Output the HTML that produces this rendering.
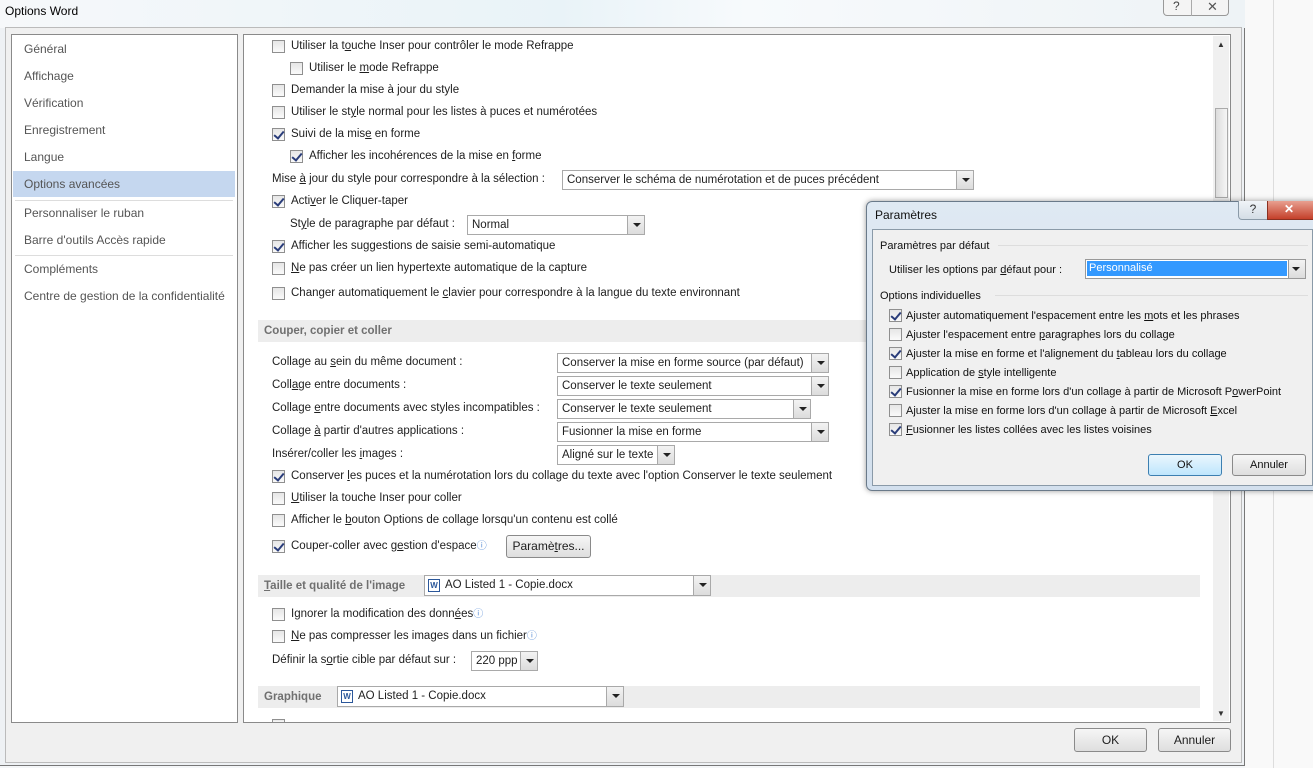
<!DOCTYPE html>
<html><head><meta charset="utf-8"><style>
*{margin:0;padding:0;box-sizing:border-box}
body{width:1313px;height:768px;overflow:hidden;background:#f4f6f8;font-family:"Liberation Sans",sans-serif;font-size:11.5px;line-height:17px;color:#1e1e1e;position:relative}
.a{position:absolute;white-space:nowrap}
.cb{position:absolute;width:13px;height:13px;border:1px solid #8f8f8f;background:linear-gradient(#e6e6e6,#fafafa)}
.cb.c::after{content:"";position:absolute;left:3px;top:0px;width:4px;height:8px;border:solid #2a3d7a;border-width:0 2px 2px 0;transform:rotate(40deg)}
.sel{position:absolute;height:20px;border:1px solid #a9a9a9;background:#fff;padding:1px 4px;white-space:nowrap;overflow:hidden}
.sel .ar{position:absolute;right:0;top:0;width:17px;height:18px;border-left:1px solid #a9a9a9;background:linear-gradient(#f3f3f3,#dcdcdc)}
.sel .ar::after{content:"";position:absolute;left:5px;top:7px;border:4px solid transparent;border-top:4px solid #222;border-bottom:0}
.band{position:absolute;left:258px;width:942px;background:#ededed;color:#707070;font-weight:bold;padding-left:6px}
.btn{position:absolute;border:1px solid #8a8a8a;border-radius:3px;background:linear-gradient(#f6f6f6,#dedede);text-align:center;font-size:12px}
.nav{position:absolute;left:24px;color:#555;font-size:12px}
u{text-decoration:underline}
.p{font-size:11px;color:#111}
</style></head><body>
<div class="a" style="left:0;top:0;width:1245px;height:766px;background:#eef1f4;border-right:1px solid #777;border-bottom:1px solid #777"></div>
<div class="a" style="left:0;top:0;width:1245px;height:28px;background:linear-gradient(90deg,#f6f8fa,#e9f3f8 45%,#f7fafc 60%,#eef3f6)"></div>
<div class="a" style="left:5px;top:3px;font-size:12px;color:#000">Options Word</div>
<div class="a" style="left:1163px;top:0;width:66px;height:16px;border:1px solid #999;border-top:0;border-radius:0 0 4px 4px;background:#f4f4f4"></div>
<div class="a" style="left:1191px;top:0;width:1px;height:16px;background:#aaa"></div>
<div class="a" style="left:1173px;top:-2px;font-size:12px;color:#444">?</div>
<div class="a" style="left:1207px;top:-2px;font-size:13px;color:#555">✕</div>
<div class="a" style="left:1245px;top:0;width:68px;height:768px;background:#f9f9f9"></div>
<div class="a" style="left:1273px;top:0;width:1px;height:768px;background:#ddd"></div>
<div class="a" style="left:5px;top:27px;width:1237px;height:736px;background:#f0f0f0;border:1px solid #bbb"></div>
<div class="a" style="left:11px;top:34px;width:227px;height:689px;background:#fff;border:1px solid #8a8a8a"></div>
<div class="a" style="left:13px;top:171px;width:222px;height:26px;background:#c5d7ef"></div>
<div class="nav" style="top:41px">Général</div>
<div class="nav" style="top:68px">Affichage</div>
<div class="nav" style="top:95px">Vérification</div>
<div class="nav" style="top:122px">Enregistrement</div>
<div class="nav" style="top:149px">Langue</div>
<div class="nav" style="top:176px">Options avancées</div>
<div class="a" style="left:15px;top:200px;width:218px;height:1px;background:#ddd"></div>
<div class="nav" style="top:205px">Personnaliser le ruban</div>
<div class="nav" style="top:232px">Barre d'outils Accès rapide</div>
<div class="a" style="left:15px;top:255px;width:218px;height:1px;background:#ddd"></div>
<div class="nav" style="top:261px">Compléments</div>
<div class="nav" style="top:288px">Centre de gestion de la confidentialité</div>
<div class="a" style="left:243px;top:34px;width:988px;height:689px;background:#fff;border:1px solid #8a8a8a"></div>
<div class="a" style="left:1213px;top:36px;width:16px;height:685px;background:#f0f0f0"></div>
<div class="a" style="left:1215px;top:108px;width:13px;height:90px;background:linear-gradient(90deg,#dcdcdc,#f6f6f6);border:1px solid #aaa"></div>
<div class="a" style="left:1217px;top:36px;font-size:8px;color:#333">▲</div>
<div class="a" style="left:1217px;top:705px;font-size:8px;color:#333">▼</div>

<div class="cb" style="left:272px;top:40px"></div><div class="a" style="left:291px;top:38px">Utiliser la t<u>o</u>uche Inser pour contrôler le mode Refrappe</div>
<div class="cb" style="left:290px;top:62px"></div><div class="a" style="left:309px;top:60px">Utiliser le <u>m</u>ode Refrappe</div>
<div class="cb" style="left:272px;top:84px"></div><div class="a" style="left:291px;top:82px">Demander la mise à jour du style</div>
<div class="cb" style="left:272px;top:106px"></div><div class="a" style="left:291px;top:104px">Utiliser le st<u>y</u>le normal pour les listes à puces et numérotées</div>
<div class="cb c" style="left:272px;top:128px"></div><div class="a" style="left:291px;top:126px">Suivi de la mis<u>e</u> en forme</div>
<div class="cb c" style="left:290px;top:150px"></div><div class="a" style="left:309px;top:148px">Afficher les incohérences de la mise en <u>f</u>orme</div>
<div class="a" style="left:272px;top:171px">Mise <u>à</u> jour du style pour correspondre à la sélection :</div>
<div class="sel" style="left:562px;top:170px;width:412px">Conserver le schéma de numérotation et de puces précédent<div class="ar"></div></div>
<div class="cb c" style="left:272px;top:195px"></div><div class="a" style="left:291px;top:193px">Acti<u>v</u>er le Cliquer-taper</div>
<div class="a" style="left:290px;top:216px">St<u>y</u>le de paragraphe par défaut :</div>
<div class="sel" style="left:467px;top:215px;width:178px">Normal<div class="ar"></div></div>
<div class="cb c" style="left:272px;top:240px"></div><div class="a" style="left:291px;top:238px">Afficher les suggestions de saisie semi-automatique</div>
<div class="cb" style="left:272px;top:262px"></div><div class="a" style="left:291px;top:260px"><u>N</u>e pas créer un lien hypertexte automatique de la capture</div>
<div class="cb" style="left:272px;top:287px"></div><div class="a" style="left:291px;top:285px">Changer automatiquement le <u>c</u>lavier pour correspondre à la langue du texte environnant</div>

<div class="band" style="top:320px;height:22px;line-height:22px">Couper, copier et coller</div>
<div class="a" style="left:272px;top:354px">Collage au <u>s</u>ein du même document :</div>
<div class="sel" style="left:557px;top:353px;width:272px">Conserver la mise en forme source (par défaut)<div class="ar"></div></div>
<div class="a" style="left:272px;top:377px">Coll<u>a</u>ge entre documents :</div>
<div class="sel" style="left:557px;top:376px;width:272px">Conserver le texte seulement<div class="ar"></div></div>
<div class="a" style="left:272px;top:400px">Collage <u>e</u>ntre documents avec styles incompatibles :</div>
<div class="sel" style="left:557px;top:399px;width:254px">Conserver le texte seulement<div class="ar"></div></div>
<div class="a" style="left:272px;top:423px">Collage <u>à</u> partir d'autres applications :</div>
<div class="sel" style="left:557px;top:422px;width:272px">Fusionner la mise en forme<div class="ar"></div></div>
<div class="a" style="left:272px;top:446px">Insérer/coller les <u>i</u>mages :</div>
<div class="sel" style="left:557px;top:445px;width:118px">Aligné sur le texte<div class="ar"></div></div>
<div class="cb c" style="left:272px;top:470px"></div><div class="a" style="left:291px;top:468px">Conserver <u>l</u>es puces et la numérotation lors du collage du texte avec l'option Conserver le texte seulement</div>
<div class="cb" style="left:272px;top:492px"></div><div class="a" style="left:291px;top:490px"><u>U</u>tiliser la touche Inser pour coller</div>
<div class="cb" style="left:272px;top:514px"></div><div class="a" style="left:291px;top:512px">Afficher le <u>b</u>outon Options de collage lorsqu'un contenu est collé</div>
<div class="cb c" style="left:272px;top:540px"></div><div class="a" style="left:291px;top:538px">Couper-coller avec g<u>e</u>stion d'espace<span style="color:#5b8fd6;font-size:10px">ⓘ</span></div>
<div class="btn" style="left:506px;top:535px;width:85px;height:23px;line-height:21px">Paramè<u>t</u>res...</div>

<div class="band" style="top:575px;height:22px;line-height:22px"><u>T</u>aille et qualité de l'image</div>
<div class="sel" style="left:424px;top:575px;width:287px;height:21px;padding-left:20px"><span style="position:absolute;left:3px;top:3px;width:12px;height:13px;border:1px solid #2b579a;background:#fff;font-size:8px;color:#2b579a;font-weight:bold;line-height:11px;text-align:center">W</span>AO Listed 1 - Copie.docx<div class="ar" style="height:19px"></div></div>
<div class="cb" style="left:272px;top:608px"></div><div class="a" style="left:291px;top:606px">Ignorer la modification des donn<u>é</u>es<span style="color:#5b8fd6;font-size:10px">ⓘ</span></div>
<div class="cb" style="left:272px;top:630px"></div><div class="a" style="left:291px;top:628px"><u>N</u>e pas compresser les images dans un fichier<span style="color:#5b8fd6;font-size:10px">ⓘ</span></div>
<div class="a" style="left:272px;top:652px">Définir la s<u>o</u>rtie cible par défaut sur :</div>
<div class="sel" style="left:471px;top:651px;width:67px">220 ppp<div class="ar"></div></div>

<div class="band" style="top:686px;height:22px;line-height:22px">Graphique</div>
<div class="sel" style="left:337px;top:686px;width:287px;height:21px;padding-left:20px"><span style="position:absolute;left:3px;top:3px;width:12px;height:13px;border:1px solid #2b579a;background:#fff;font-size:8px;color:#2b579a;font-weight:bold;line-height:11px;text-align:center">W</span>AO Listed 1 - Copie.docx<div class="ar" style="height:19px"></div></div>
<div class="cb" style="left:272px;top:719px;height:3px;border-bottom:0"></div>

<div class="btn" style="left:1074px;top:728px;width:73px;height:24px;line-height:22px">OK</div>
<div class="btn" style="left:1158px;top:728px;width:73px;height:24px;line-height:22px">Annuler</div>

<div class="a" style="left:866px;top:201px;width:450px;height:290px;background:linear-gradient(#dfe9f3,#d3e0ee);border:1px solid #6a7a8a;border-radius:6px 0 0 6px;box-shadow:0 0 6px rgba(0,0,0,.4)"></div>
<div class="a p" style="left:875px;top:207px;font-size:12px">Paramètres</div>
<div class="a" style="left:1238px;top:201px;width:30px;height:19px;border:1px solid #8a9aa8;border-top:0;border-radius:0 0 0 4px;background:linear-gradient(#f0f4f8,#d4dde6);text-align:center;font-size:12px;color:#333">?</div>
<div class="a" style="left:1267px;top:201px;width:50px;height:19px;background:linear-gradient(#e8a090,#c4402a);border:1px solid #8a3020;border-top:0;color:#fff;font-weight:bold;font-size:12px;padding-left:16px">✕</div>
<div class="a" style="left:872px;top:229px;width:441px;height:257px;background:#f0f0f0;border:1px solid #8a9aa8"></div>
<div class="a p" style="left:880px;top:238px">Paramètres par défaut</div>
<div class="a" style="left:998px;top:245px;width:310px;height:1px;background:#ddd"></div>
<div class="a p" style="left:889px;top:262px">Utiliser les options par <u>d</u>éfaut pour :</div>
<div class="a" style="left:1085px;top:259px;width:221px;height:20px;border:1px solid #999;background:#fff"></div>
<div class="a p" style="left:1087px;top:261px;width:200px;height:15px;background:#3399ff;color:#fff;padding-left:2px;line-height:15px">Personnalisé</div>
<div class="a" style="left:1288px;top:260px;width:17px;height:18px;background:linear-gradient(#f3f3f3,#dcdcdc);border-left:1px solid #999"></div>
<div class="a" style="left:1292px;top:267px;border:4px solid transparent;border-top:4px solid #222;border-bottom:0"></div>
<div class="a p" style="left:880px;top:288px">Options individuelles</div>
<div class="a" style="left:995px;top:295px;width:313px;height:1px;background:#ddd"></div>
<div class="cb c" style="left:889px;top:309px"></div><div class="a p" style="left:906px;top:308px">Ajuster automatiquement l'espacement entre les <u>m</u>ots et les phrases</div>
<div class="cb" style="left:889px;top:328px"></div><div class="a p" style="left:906px;top:327px">Ajuster l'espacement entre <u>p</u>aragraphes lors du collage</div>
<div class="cb c" style="left:889px;top:347px"></div><div class="a p" style="left:906px;top:346px">Ajuster la mise en forme et l'alignement du <u>t</u>ableau lors du collage</div>
<div class="cb" style="left:889px;top:366px"></div><div class="a p" style="left:906px;top:365px">Application de <u>s</u>tyle intelligente</div>
<div class="cb c" style="left:889px;top:385px"></div><div class="a p" style="left:906px;top:384px">Fusionner la mise en forme lors d'un collage à partir de Microsoft P<u>o</u>werPoint</div>
<div class="cb" style="left:889px;top:404px"></div><div class="a p" style="left:906px;top:403px">Ajuster la mise en forme lors d'un collage à partir de Microsoft <u>E</u>xcel</div>
<div class="cb c" style="left:889px;top:423px"></div><div class="a p" style="left:906px;top:422px"><u>F</u>usionner les listes collées avec les listes voisines</div>
<div class="btn p" style="left:1148px;top:454px;width:74px;height:22px;line-height:20px;border-color:#3c7fb1;background:linear-gradient(#eaf6fd,#bee6fd)">OK</div>
<div class="btn p" style="left:1232px;top:454px;width:74px;height:22px;line-height:20px">Annuler</div>
</body></html>
